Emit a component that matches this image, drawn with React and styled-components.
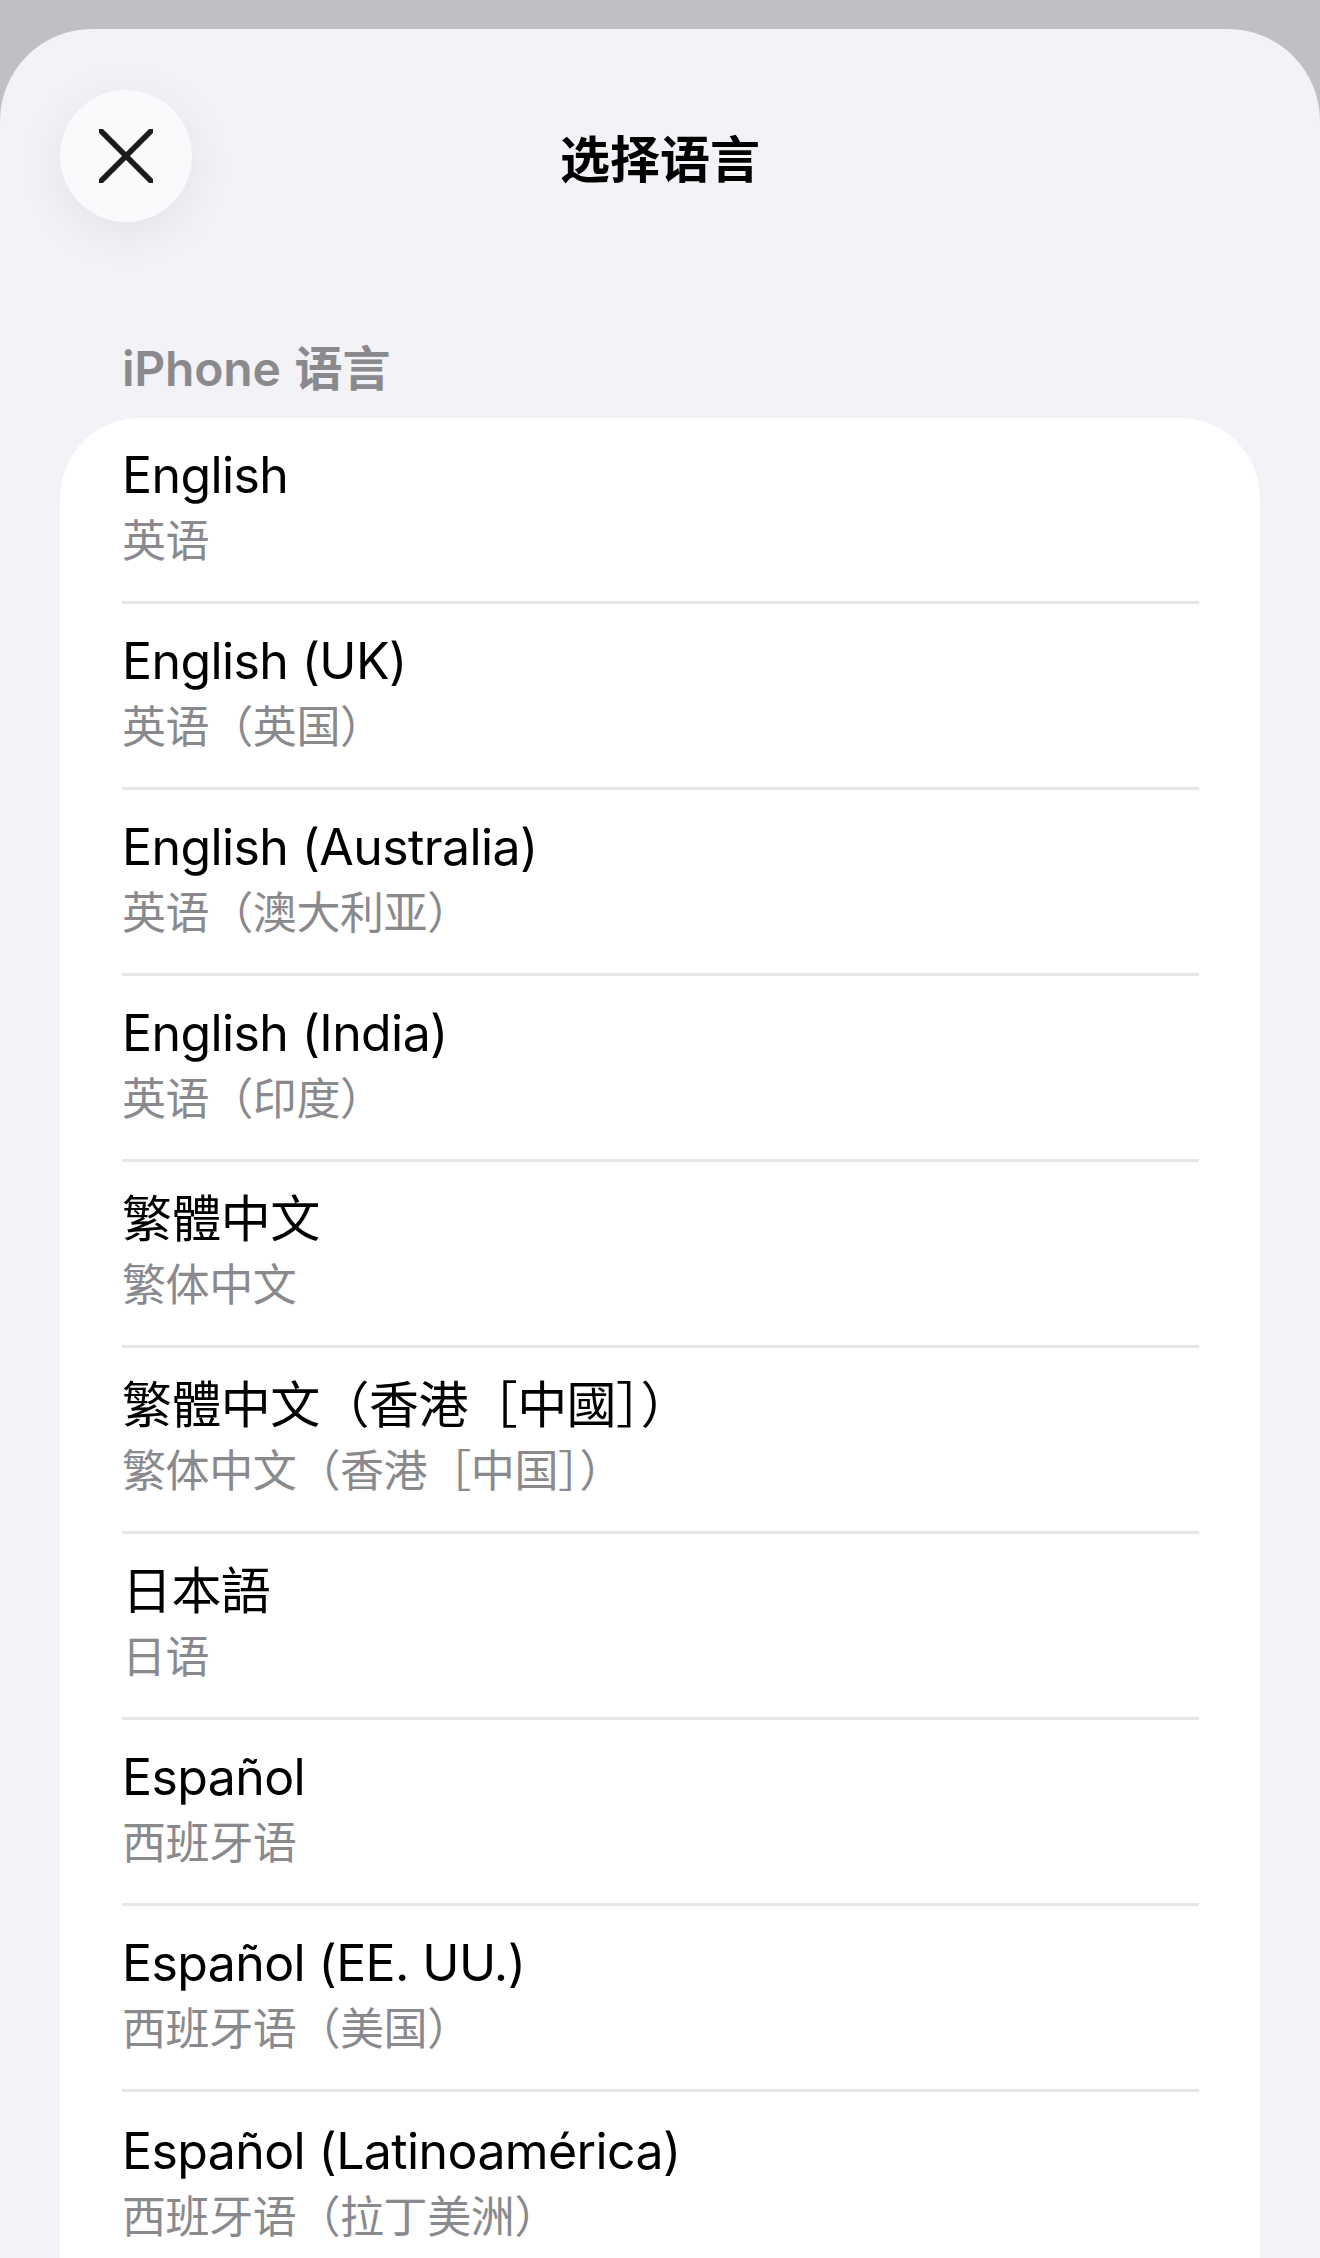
import React from 'react';
import styled, { createGlobalStyle } from 'styled-components';

const GlobalStyle = createGlobalStyle`
  html, body {
    margin: 0;
    padding: 0;
    background: #c0bfc4;
  }
  body {
    font-family: Inter, "Noto Sans CJK SC", sans-serif;
    -webkit-font-smoothing: antialiased;
  }
`;

const Screen = styled.div`
  height: 100vh;
  overflow: hidden;
  padding-top: 29px;
  box-sizing: border-box;
  display: flex;
  flex-direction: column;
`;

const Sheet = styled.div`
  flex: 1 0 auto;
  background: #f2f2f7;
  border-radius: 92px 92px 0 0;
  display: flex;
  flex-direction: column;
`;

const Header = styled.div`
  flex-shrink: 0;
  display: grid;
  grid-template-columns: 132px 1fr 132px;
  align-items: center;
  padding: 61px 60px 0;
`;

const CloseButton = styled.button`
  width: 132px;
  height: 132px;
  border-radius: 50%;
  border: none;
  background: #fafafc;
  box-shadow: 0 10px 48px rgba(0, 0, 0, 0.07);
  display: flex;
  align-items: center;
  justify-content: center;
  padding: 0;
`;

const Title = styled.h1`
  margin: 0;
  text-align: center;
  font-size: 50px;
  font-weight: 700;
  color: #000;
  font-family: "Noto Sans CJK SC", sans-serif;
`;

const SectionLabel = styled.div`
  flex-shrink: 0;
  height: 196px;
  box-sizing: border-box;
  padding: 119px 0 0 122px;
  font-size: 48px;
  font-weight: 600;
  letter-spacing: -0.2px;
  word-spacing: 2px;
  color: #8a8a8e;
  line-height: 56px;
`;

const Card = styled.div`
  flex: 1 0 auto;
  margin: 0 60px;
  background: #fff;
  border-radius: 80px 80px 0 0;
`;

const Row = styled.div`
  height: 186px;
  margin-left: 62px;
  margin-right: 61px;
  box-sizing: border-box;
  display: flex;
  flex-direction: column;
  justify-content: center;
  border-bottom: ${(p) => (p.last ? 'none' : '3px solid #e5e5ea')};
  padding-bottom: 4px;
`;

const Name = styled.div`
  font-size: 50px;
  line-height: 64px;
  letter-spacing: -0.6px;
  color: #000;
`;

const Sub = styled.div`
  margin-top: 3px;
  font-size: 44px;
  line-height: 62px;
  letter-spacing: -0.4px;
  color: #8a8a8e;
`;

const languages = [
  ['English', '英语'],
  ['English (UK)', '英语（英国）'],
  ['English (Australia)', '英语（澳大利亚）'],
  ['English (India)', '英语（印度）'],
  ['繁體中文', '繁体中文'],
  ['繁體中文（香港［中國］）', '繁体中文（香港［中国］）'],
  ['日本語', '日语'],
  ['Español', '西班牙语'],
  ['Español (EE. UU.)', '西班牙语（美国）'],
  ['Español (Latinoamérica)', '西班牙语（拉丁美洲）'],
];

const CloseIcon = function () {
  return (
    <svg width="54" height="54" viewBox="0 0 54 54">
      <path
        d="M2 2 L52 52 M52 2 L2 52"
        stroke="#1c1c1e"
        strokeWidth="5.5"
        strokeLinecap="round"
      />
    </svg>
  );
};

const App = function () {
  return (
    <>
      <GlobalStyle />
      <Screen>
        <Sheet>
          <Header>
            <CloseButton aria-label="关闭">
              <CloseIcon />
            </CloseButton>
            <Title>选择语言</Title>
            <span />
          </Header>
          <SectionLabel>iPhone 语言</SectionLabel>
          <Card>
            {languages.map(([name, sub], idx) => (
              <Row key={name} last={idx === languages.length - 1}>
                <Name>{name}</Name>
                <Sub>{sub}</Sub>
              </Row>
            ))}
          </Card>
        </Sheet>
      </Screen>
    </>
  );
};

export default App;
